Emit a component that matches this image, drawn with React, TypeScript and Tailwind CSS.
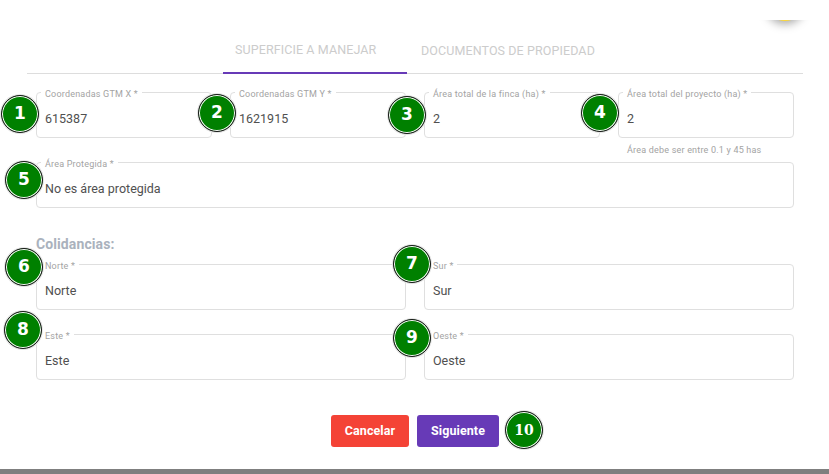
import React from 'react';

interface FieldProps {
  label: string;
  value: string;
  className?: string;
}

const Field: React.FC<FieldProps> = ({ label, value, className }) => (
  <fieldset className={`h-[51px] border border-[#dfdfdf] rounded-[4px] px-[4px] min-w-0 ${className ?? ''}`}>
    <legend className="px-[4px] h-[10px] text-[9px] leading-[14px] text-[#a3a3a3] tracking-[0.2px] whitespace-nowrap">{label}</legend>
    <div className="pl-[4px] pt-[13px] text-[12.5px] leading-[18px] text-[#505050]">{value}</div>
  </fieldset>
);

const badges = [
  { n: '1', cls: "left-[1px] top-[95px] text-[17px] font-['DejaVu_Sans',sans-serif]" },
  { n: '2', cls: "left-[198px] top-[94px] text-[17px] font-['DejaVu_Sans',sans-serif]" },
  { n: '3', cls: "left-[388px] top-[96px] text-[17px] font-['DejaVu_Sans',sans-serif]" },
  { n: '4', cls: "left-[581px] top-[94px] text-[17px] font-['DejaVu_Sans',sans-serif]" },
  { n: '5', cls: "left-[5px] top-[161px] text-[17px] font-['DejaVu_Sans',sans-serif]" },
  { n: '6', cls: "left-[5px] top-[248px] text-[17px] font-['DejaVu_Sans',sans-serif]" },
  { n: '7', cls: "left-[393px] top-[245px] text-[17px] font-['DejaVu_Sans',sans-serif]" },
  { n: '8', cls: "left-[4px] top-[311px] text-[17px] font-['DejaVu_Sans',sans-serif]" },
  { n: '9', cls: "left-[393px] top-[319px] text-[17px] font-['DejaVu_Sans',sans-serif]" },
  { n: '10', cls: "left-[505px] top-[411px] text-[14px] font-['DejaVu_Serif',serif]" },
];

export default function App() {
  return (
    <div className="relative w-[829px] h-[474px] bg-white overflow-hidden flex flex-col font-['Roboto',sans-serif]">
      {/* bottom of the button cut off above the dialog */}
      <div className="absolute left-[745px] top-[20px] w-[80px] h-[24px] overflow-hidden">
        <div className="absolute left-[20px] top-[-39px] w-[40px] h-[40px] rounded-full bg-[#fdd835] shadow-[0_3px_10px_rgba(0,0,0,0.35)]" />
      </div>

      <div className="mt-[28px] ml-[27px] w-[776px] h-[46px] flex border-b border-[#dddddd]">
        <div className="ml-[196px] w-[184px] h-[46px] border-b-[2px] border-[#673ab7] flex items-center pl-[12px] pt-[1px] text-[12.5px] text-[#cccccc] tracking-[0.1px]">
          SUPERFICIE A MANEJAR
        </div>
        <div className="ml-[14px] h-[45px] flex items-center pt-[1px] text-[12.5px] text-[#cccccc] tracking-[0.1px]">
          DOCUMENTOS DE PROPIEDAD
        </div>
      </div>

      <div className="mt-[13px] ml-[36px] w-[758px] flex flex-col">
        <div className="grid grid-cols-[176px_176px_176px_176px] gap-x-[18px]">
          <Field label="Coordenadas GTM X *" value="615387" />
          <Field label="Coordenadas GTM Y *" value="1621915" />
          <Field label="Área total de la finca (ha) *" value="2" />
          <Field label="Área total del proyecto (ha) *" value="2" />
        </div>
        <div className="h-[19px] pl-[591px] pt-[5px] text-[9px] leading-[14px] text-[#a3a3a3] tracking-[0.2px] whitespace-nowrap">
          Área debe ser entre 0.1 y 45 has
        </div>
        <Field label="Área Protegida *" value="No es área protegida" />
        <div className="mt-[28px] h-[23px] text-[14px] leading-[16px] font-bold text-[#aab2bd] tracking-[0.1px]">Colidancias:</div>
        <div className="grid grid-cols-[370px_370px] gap-x-[18px] gap-y-[19px]">
          <Field label="Norte *" value="Norte" />
          <Field label="Sur *" value="Sur" />
          <Field label="Este *" value="Este" />
          <Field label="Oeste *" value="Oeste" />
        </div>
      </div>

      <div className="mt-[35px] ml-[331px] flex gap-2">
        <button className="w-[78px] h-[32px] rounded-[3px] bg-[#f44336] text-white text-[12.5px] tracking-[0.1px] font-bold">Cancelar</button>
        <button className="w-[82px] h-[32px] rounded-[3px] bg-[#673ab7] text-white text-[12.5px] tracking-[0.1px] font-bold">Siguiente</button>
      </div>

      <div className="mt-auto h-[5px] bg-[#7f7f7f]" />

      {badges.map(b => (
        <div
          key={b.n}
          className={`absolute ${b.cls} w-[38px] h-[38px] rounded-full bg-[#008000] border border-[#1a1a1a] shadow-[inset_0_0_0_1px_#ffffff,0_0_0_1px_#e5e5e5] flex items-center justify-center text-white font-bold`}
        >
          {b.n}
        </div>
      ))}
    </div>
  );
}
